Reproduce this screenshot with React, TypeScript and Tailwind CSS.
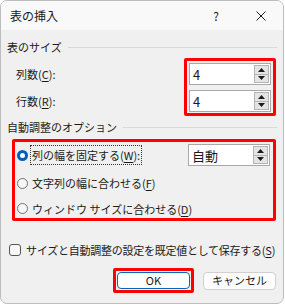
import React from "react";

function Spin({ value }: { value: string }) {
  return (
    <div className="flex h-[22px] w-full items-stretch border border-[#a8a8a8] bg-white">
      <div className="flex flex-1 items-center pl-[3px] text-[13px] leading-none">{value}</div>
      <div className="my-[1px] mr-[1px] flex w-[15px] flex-col">
        <div className="flex flex-1 items-center justify-center border border-[#b4b4b4] bg-[#e4e4e4]">
          <svg width="7" height="4" viewBox="0 0 7 4"><path d="M3.5 0L7 4H0z" fill="#1a1a1a" /></svg>
        </div>
        <div className="flex flex-1 items-center justify-center border border-t-0 border-[#b4b4b4] bg-[#e4e4e4]">
          <svg width="7" height="4" viewBox="0 0 7 4"><path d="M0 0h7L3.5 4z" fill="#1a1a1a" /></svg>
        </div>
      </div>
    </div>
  );
}

function Radio({ checked }: { checked?: boolean }) {
  if (checked)
    return (
      <div className="flex h-[11px] w-[11px] items-center justify-center rounded-full bg-[#005fb8]">
        <div className="h-[5px] w-[5px] rounded-full bg-white" />
      </div>
    );
  return <div className="h-[11px] w-[11px] rounded-full border border-[#707070] bg-[#f6f6f6]" />;
}

function U({ c }: { c: string }) {
  return <span className="underline underline-offset-2">{c}</span>;
}

export default function App() {
  return (
    <div className="h-[308px] w-[285px] whitespace-nowrap bg-white font-['Noto_Sans_CJK_JP',sans-serif] text-[11px] text-[#1a1a1a]">
      <div className="flex h-[304px] w-[284px] flex-col overflow-hidden rounded-[7px] border border-[#bdbdbd] bg-[#f0f0f0]">
        {/* title bar */}
        <div className="flex h-[29px] shrink-0 items-center bg-[#f9f9f9] pl-[9px]">
          <span className="text-[12px] leading-none">表の挿入</span>
          <span className="ml-auto mr-[37px] text-[12px] leading-none">?</span>
          <svg className="mr-[17px]" width="10" height="10" viewBox="0 0 10 10">
            <path d="M0.5 0.5L9.5 9.5M9.5 0.5L0.5 9.5" stroke="#1a1a1a" strokeWidth="1" />
          </svg>
        </div>

        {/* body */}
        <div className="flex flex-col pl-[6px] pr-[6px]">
          {/* section 1 header */}
          <div className="mt-[11px] flex items-center">
            <span className="leading-[12px]">表のサイズ</span>
            <div className="ml-[6px] h-px flex-1 bg-[#d8d8d8]" />
          </div>

          <div className="mt-[5px] flex">
            <div className="flex flex-col gap-[5px] pl-[9px] pt-[5px]">
              <div className="flex h-[22px] items-center">
                列数(<U c="C" />):
              </div>
              <div className="flex h-[22px] items-center">
                行数(<U c="R" />):
              </div>
            </div>
            <div className="ml-auto mr-[1px] flex w-[92px] flex-col gap-[5px] rounded-[2px] border-[3px] border-[#ff0000] px-[2px] pt-[2px] pb-[1px]">
              <Spin value="4" />
              <Spin value="4" />
            </div>
          </div>

          {/* section 2 header */}
          <div className="mt-[5px] flex items-center">
            <span className="leading-[12px]">自動調整のオプション</span>
            <div className="ml-[6px] h-px flex-1 bg-[#d8d8d8]" />
          </div>

          <div className="ml-[5px] mr-[1px] mt-[6px] flex h-[82px] flex-col rounded-[2px] border-[3px] border-[#ff0000]">
            <div className="mt-[2px] flex h-[22px] items-center">
              <div className="ml-[2px]"><Radio checked /></div>
              <div className="ml-[2px] flex h-[20px] items-center border border-dotted border-[#333] px-[1px]">
                列の幅を固定する(<U c="W" />):
              </div>
              <div className="ml-auto mr-[3px] w-[82px]">
                <Spin value="自動" />
              </div>
            </div>
            <div className="mt-[8px] flex h-[20px] items-center">
              <div className="ml-[2px]"><Radio /></div>
              <div className="ml-[4px]">文字列の幅に合わせる(<U c="F" />)</div>
            </div>
            <div className="mt-[7px] flex h-[20px] items-center">
              <div className="ml-[2px]"><Radio /></div>
              <div className="ml-[4px]">ウィンドウ サイズに合わせる(<U c="D" />)</div>
            </div>
          </div>

          {/* checkbox */}
          <div className="mt-[22px] flex h-[14px] items-center pl-[2px]">
            <div className="h-[12px] w-[12px] shrink-0 rounded-[3px] border border-[#555] bg-[#f7f7f7]" />
            <span className="ml-[5px] tracking-[-0.25px]">サイズと自動調整の設定を既定値として保存する(<U c="S" />)</span>
          </div>

          {/* buttons */}
          <div className="mt-[11px] flex items-center justify-end pr-[1px]">
            <div className="rounded-[2px] border-[3px] border-[#ff0000] p-[1px]">
              <div className="flex h-[17px] w-[73px] items-center justify-center rounded-[4px] border border-[#0067c0] bg-[#fdfdfd]">
                OK
              </div>
            </div>
            <div className="ml-[9px] flex h-[18px] w-[73px] items-center justify-center rounded-[4px] border border-[#d0d0d0] bg-[#fdfdfd]">
              キャンセル
            </div>
          </div>
        </div>
      </div>
    </div>
  );
}
